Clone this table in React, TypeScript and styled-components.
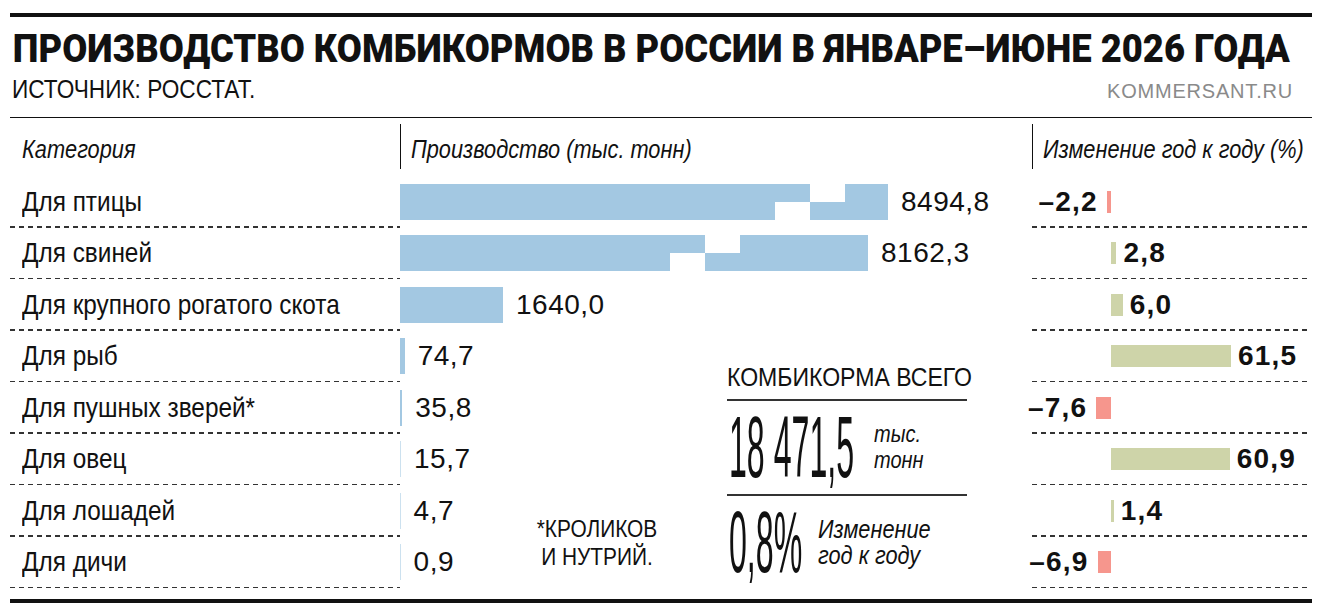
import React from "react";
import styled, { createGlobalStyle } from "styled-components";

const SANS = `"Liberation Sans", Arial, sans-serif`;
const HEAVY = `"Roboto", "Liberation Sans", sans-serif`;

const INK = "#111111";
const BAR_BLUE = "#a3c8e2";
const GROW_GREEN = "#ced4a9";
const FALL_RED = "#f6968d";

const PROD_SCALE = 0.0628;
const CHANGE_SCALE = 1.95;

type Row = {
  name: string;
  value: number;
  label: string;
  change: number;
  changeLabel: string;
  // capped bars: total drawn width and where the break mark starts
  capped?: { width: number; breakAt: number };
};

const rows: Row[] = [
  { name: "Для птицы", value: 8494.8, label: "8494,8", change: -2.2, changeLabel: "–2,2", capped: { width: 488, breakAt: 375 } },
  { name: "Для свиней", value: 8162.3, label: "8162,3", change: 2.8, changeLabel: "2,8", capped: { width: 468, breakAt: 270 } },
  { name: "Для крупного рогатого скота", value: 1640.0, label: "1640,0", change: 6.0, changeLabel: "6,0" },
  { name: "Для рыб", value: 74.7, label: "74,7", change: 61.5, changeLabel: "61,5" },
  { name: "Для пушных зверей*", value: 35.8, label: "35,8", change: -7.6, changeLabel: "–7,6" },
  { name: "Для овец", value: 15.7, label: "15,7", change: 60.9, changeLabel: "60,9" },
  { name: "Для лошадей", value: 4.7, label: "4,7", change: 1.4, changeLabel: "1,4" },
  { name: "Для дичи", value: 0.9, label: "0,9", change: -6.9, changeLabel: "–6,9" },
];

const GlobalStyle = createGlobalStyle`
  html, body {
    margin: 0;
    padding: 0;
    background: #ffffff;
  }
  body {
    font-family: ${SANS};
    color: ${INK};
  }
`;

// Arial squeezed to the width of a narrow grotesque
const Narrow = styled.span<{ $center?: boolean }>`
  display: ${(p) => (p.$center ? "block" : "inline-block")};
  white-space: nowrap;
  transform: scaleX(0.87);
  transform-origin: ${(p) => (p.$center ? "center" : "left")} center;
`;

const Page = styled.div`
  width: 1302px;
  margin: 13px 0 0 10px;
  border-top: 4px solid ${INK};
`;

const Title = styled.h1`
  margin: 0;
  padding: 10px 0 0 3px;
  font-family: ${HEAVY};
  font-weight: 900;
  font-size: 38px;
  line-height: 44px;
  white-space: nowrap;
  transform: scaleX(0.957);
  transform-origin: left center;
`;

const SubRow = styled.div`
  display: flex;
  justify-content: space-between;
  align-items: baseline;
  padding: 4px 19px 14px 2px;
  border-bottom: 1.5px solid ${INK};
`;

const Source = styled.div`
  font-size: 26px;
  line-height: 28px;
`;

const Brand = styled.span`
  font-size: 20px;
  letter-spacing: 0.8px;
  color: #8a8a8a;
`;

const Table = styled.div`
  display: grid;
  grid-template-columns: 390px 632px 280px;
  grid-template-rows: 58px repeat(8, 51.5px);
`;

const HeaderCell = styled.div<{ $col: number; $divider?: boolean }>`
  grid-row: 1;
  grid-column: ${(p) => p.$col};
  min-width: 0;
  display: flex;
  align-items: center;
  margin: 6px 0 7px;
  padding: 6px 0 0 ${(p) => (p.$divider ? 10 : 12)}px;
  border-left: ${(p) => (p.$divider ? `1.5px solid ${INK}` : "none")};
  font-style: italic;
  font-size: 25px;
`;

const dashed = `
  background-image: linear-gradient(to right, #333 55%, transparent 55%);
  background-size: 9px 1.5px;
  background-repeat: repeat-x;
  background-position: left bottom;
`;

const NameCell = styled.div<{ $row: number }>`
  grid-row: ${(p) => p.$row};
  grid-column: 1;
  min-width: 0;
  display: flex;
  align-items: center;
  padding-left: 12px;
  font-size: 28px;
  ${dashed}
`;

const BarCell = styled.div<{ $row: number }>`
  grid-row: ${(p) => p.$row};
  grid-column: 2;
  min-width: 0;
  display: flex;
  align-items: center;
`;

const Bar = styled.div`
  display: flex;
  flex-shrink: 0;
  height: 36px;
  background: ${BAR_BLUE};
`;

const BreakStep = styled.div<{ $up: boolean }>`
  width: 35px;
  height: 100%;
  background: linear-gradient(
    to bottom,
    ${(p) => (p.$up ? BAR_BLUE : "#ffffff")} 50%,
    ${(p) => (p.$up ? "#ffffff" : BAR_BLUE)} 50%
  );
`;

const ValueLabel = styled.span`
  margin-left: 13px;
  font-size: 28px;
  letter-spacing: 0.5px;
`;

const ChangeCell = styled.div<{ $row: number }>`
  grid-row: ${(p) => p.$row};
  grid-column: 3;
  min-width: 0;
  display: flex;
  align-items: center;
  margin-right: 5px;
  ${dashed}
`;

const NegSide = styled.div`
  width: 79px;
  flex-shrink: 0;
  display: flex;
  justify-content: flex-end;
  align-items: center;
  gap: 9px;
`;

const PosSide = styled.div`
  display: flex;
  align-items: center;
  gap: 7px;
`;

const ChangeBar = styled.div<{ $negative: boolean }>`
  flex-shrink: 0;
  height: 22px;
  background: ${(p) => (p.$negative ? FALL_RED : GROW_GREEN)};
`;

const ChangeLabel = styled.span`
  font-weight: 700;
  font-size: 28px;
  letter-spacing: 1.2px;
  white-space: nowrap;
`;

const Summary = styled.div`
  grid-column: 2;
  grid-row: 5 / 10;
  justify-self: end;
  align-self: start;
  width: 240px;
  margin: 31px 65px 0 0;
  display: flex;
  flex-direction: column;
`;

const SummaryTitle = styled.div`
  font-size: 26.5px;
  line-height: 30px;
  padding-bottom: 7px;
  border-bottom: 2px solid #333;
`;

const SummaryLine = styled.div<{ $ruled?: boolean }>`
  display: flex;
  align-items: center;
  height: 93px;
  border-bottom: ${(p) => (p.$ruled ? "2px solid #333" : "none")};
`;

const TallBox = styled.div<{ $width: number }>`
  width: ${(p) => p.$width}px;
  flex-shrink: 0;
  height: 70px;
  margin-left: 2px;
`;

const TallNumber = styled.span`
  display: inline-block;
  font-size: 88px;
  line-height: 70px;
  white-space: pre;
  transform: scaleX(0.365);
  transform-origin: left center;
`;

const Unit = styled.div<{ $size: number }>`
  font-style: italic;
  font-size: ${(p) => p.$size}px;
  line-height: 26px;
`;

const Footnote = styled.div`
  grid-column: 2;
  grid-row: 8 / 10;
  justify-self: start;
  align-self: center;
  width: 142px;
  margin: 12px 0 0 126px;
  font-size: 24px;
  line-height: 28px;
  text-align: center;
`;

const BottomRule = styled.div`
  margin-top: 11px;
  border-top: 4px solid ${INK};
`;

function ProductionBar({ row }: { row: Row }) {
  if (row.capped) {
    const { width, breakAt } = row.capped;
    return (
      <Bar style={{ width }}>
        <div style={{ width: breakAt }} />
        <BreakStep $up={true} />
        <BreakStep $up={false} />
      </Bar>
    );
  }
  const w = row.value * PROD_SCALE;
  return <Bar style={{ width: Math.max(w, 0.6), opacity: w < 1.2 ? 0.55 : 1 }} />;
}

function ChangeValue({ row }: { row: Row }) {
  const negative = row.change < 0;
  const w = Math.max(Math.abs(row.change) * CHANGE_SCALE, 2);
  return (
    <>
      <NegSide>
        {negative && (
          <>
            <ChangeLabel>{row.changeLabel}</ChangeLabel>
            <ChangeBar $negative={true} style={{ width: w }} />
          </>
        )}
      </NegSide>
      {!negative && (
        <PosSide>
          <ChangeBar $negative={false} style={{ width: w }} />
          <ChangeLabel>{row.changeLabel}</ChangeLabel>
        </PosSide>
      )}
    </>
  );
}

export default function App() {
  return (
    <>
      <GlobalStyle />
      <Page>
        <Title>ПРОИЗВОДСТВО КОМБИКОРМОВ В РОССИИ В ЯНВАРЕ–ИЮНЕ 2026 ГОДА</Title>
        <SubRow>
          <Source>
            <Narrow>ИСТОЧНИК: РОССТАТ.</Narrow>
          </Source>
          <Brand>KOMMERSANT.RU</Brand>
        </SubRow>
        <Table>
          <HeaderCell $col={1}>
            <Narrow>Категория</Narrow>
          </HeaderCell>
          <HeaderCell $col={2} $divider>
            <Narrow>Производство (тыс. тонн)</Narrow>
          </HeaderCell>
          <HeaderCell $col={3} $divider>
            <Narrow>Изменение год к году (%)</Narrow>
          </HeaderCell>

          {rows.map((row, i) => (
            <React.Fragment key={row.name}>
              <NameCell $row={i + 2}>
                <Narrow>{row.name}</Narrow>
              </NameCell>
              <BarCell $row={i + 2}>
                <ProductionBar row={row} />
                <ValueLabel>{row.label}</ValueLabel>
              </BarCell>
              <ChangeCell $row={i + 2}>
                <ChangeValue row={row} />
              </ChangeCell>
            </React.Fragment>
          ))}

          <Summary>
            <SummaryTitle>
              <Narrow>КОМБИКОРМА ВСЕГО</Narrow>
            </SummaryTitle>
            <SummaryLine $ruled>
              <TallBox $width={145}>
                <TallNumber>18 471,5</TallNumber>
              </TallBox>
              <div>
                <Unit $size={23}>
                  <Narrow>тыс.</Narrow>
                </Unit>
                <Unit $size={23}>
                  <Narrow>тонн</Narrow>
                </Unit>
              </div>
            </SummaryLine>
            <SummaryLine>
              <TallBox $width={89}>
                <TallNumber>0,8%</TallNumber>
              </TallBox>
              <div>
                <Unit $size={25}>
                  <Narrow>Изменение</Narrow>
                </Unit>
                <Unit $size={25}>
                  <Narrow>год к году</Narrow>
                </Unit>
              </div>
            </SummaryLine>
          </Summary>

          <Footnote>
            <Narrow $center>*КРОЛИКОВ</Narrow>
            <Narrow $center>И НУТРИЙ.</Narrow>
          </Footnote>
        </Table>
        <BottomRule />
      </Page>
    </>
  );
}
